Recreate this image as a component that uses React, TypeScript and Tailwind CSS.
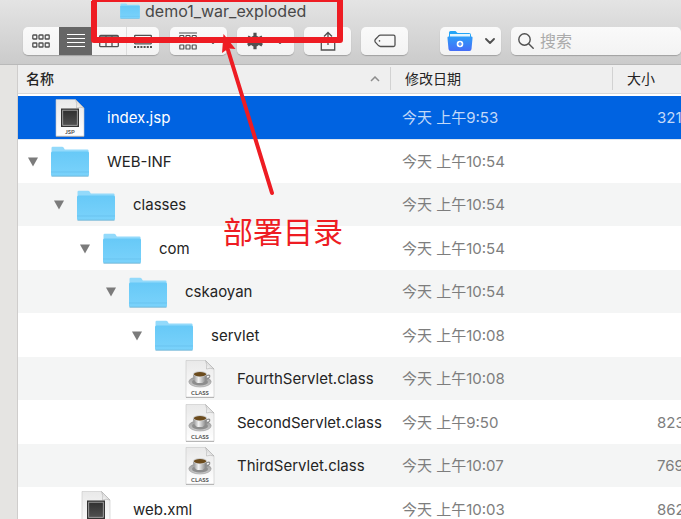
import React from 'react';

type Kind = 'folder' | 'class' | 'doc' | 'jsp';
type Entry = { name: string; kind: Kind; level: number; date: string; size?: string };

const entries: Entry[] = [
  { name: 'index.jsp', kind: 'jsp', level: 0, date: '今天 上午9:53', size: '321' },
  { name: 'WEB-INF', kind: 'folder', level: 0, date: '今天 上午10:54' },
  { name: 'classes', kind: 'folder', level: 1, date: '今天 上午10:54' },
  { name: 'com', kind: 'folder', level: 2, date: '今天 上午10:54' },
  { name: 'cskaoyan', kind: 'folder', level: 3, date: '今天 上午10:54' },
  { name: 'servlet', kind: 'folder', level: 4, date: '今天 上午10:08' },
  { name: 'FourthServlet.class', kind: 'class', level: 5, date: '今天 上午10:08' },
  { name: 'SecondServlet.class', kind: 'class', level: 5, date: '今天 上午9:50', size: '823' },
  { name: 'ThirdServlet.class', kind: 'class', level: 5, date: '今天 上午10:07', size: '769' },
  { name: 'web.xml', kind: 'doc', level: 1, date: '今天 上午10:03', size: '862' },
];

const indents = ['pl-[10px]', 'pl-[36px]', 'pl-[62px]', 'pl-[88px]', 'pl-[114px]', 'pl-[140px]'];

const toolButton =
  'flex h-7 shrink-0 items-center justify-center rounded-[5px] bg-gradient-to-b from-[#fafafa] to-[#f3f3f3] shadow-[0_1px_1px_rgba(0,0,0,0.22)] text-[#505050]';

function Folder({ className }: { className: string }) {
  return (
    <svg viewBox="0 0 38 31" className={className} aria-hidden="true">
      <defs>
        <linearGradient id="folderFace" x1="0" y1="0" x2="0" y2="1">
          <stop offset="0" stopColor="#67c9f7" />
          <stop offset="1" stopColor="#7ad2fb" />
        </linearGradient>
      </defs>
      <path d="M0.500 30V2Q0.500 0.800 1.700 0.800H11Q12.300 0.800 12.900 2L13.800 3.500H36.400Q37.600 3.500 37.600 4.700V30Z" fill="#93dafb" />
      <path d="M0 7Q0 5.500 1.500 5.500H36.500Q38 5.500 38 7V28.500Q38 30 36.500 30H1.500Q0 30 0 28.500Z" fill="url(#folderFace)" />
      <path d="M0 26H38" stroke="#64bfeb" strokeWidth="0.7" />
      <path d="M0.500 30.200H37.500" stroke="#69b2d5" strokeWidth="0.9" />
    </svg>
  );
}

function PageIcon({ kind }: { kind: Kind }) {
  return (
    <svg viewBox="0 0 30 38" className="h-[38px] w-[30px]" aria-hidden="true">
      <defs>
        <linearGradient id="paper" x1="0" y1="0" x2="0" y2="1">
          <stop offset="0" stopColor="#e9e9e9" />
          <stop offset="1" stopColor="#ffffff" />
        </linearGradient>
        <linearGradient id="curl" x1="0" y1="1" x2="1" y2="0">
          <stop offset="0" stopColor="#ffffff" />
          <stop offset="1" stopColor="#bcbcbc" />
        </linearGradient>
        <linearGradient id="cup" x1="0" y1="0" x2="1" y2="0">
          <stop offset="0" stopColor="#8b8b8b" />
          <stop offset="0.400" stopColor="#f2f2f2" />
          <stop offset="1" stopColor="#777777" />
        </linearGradient>
        <linearGradient id="plate" x1="0" y1="0" x2="0" y2="1">
          <stop offset="0" stopColor="#9a9a9a" />
          <stop offset="1" stopColor="#cccccc" />
        </linearGradient>
        <linearGradient id="screen" x1="0" y1="0" x2="0" y2="1">
          <stop offset="0" stopColor="#303030" />
          <stop offset="1" stopColor="#505050" />
        </linearGradient>
      </defs>
      <path d="M1 0.500H20.500L29 9V37.300H1Z" fill="url(#paper)" stroke="#c6c6c6" strokeWidth="0.6" />
      <path d="M1 37.400H29" stroke="#a5a5a5" strokeWidth="0.8" />
      <path d="M20.500 0.500L29 9Q25 7.500 21.500 9Q22.500 4.500 20.500 0.500Z" fill="url(#curl)" stroke="#a5a5a5" strokeWidth="0.500" />
      {kind === 'class' ? (
        <>
          <ellipse cx="15" cy="21.800" rx="11.200" ry="5.200" fill="url(#plate)" stroke="#8f8f8f" strokeWidth="0.500" />
          <ellipse cx="15" cy="22" rx="8" ry="3.600" fill="#8d8d8d" />
          <path d="M22 15.500Q25.500 14.500 24.600 17Q23.500 19 21 19.300" fill="none" stroke="#8a8a8a" strokeWidth="1.200" />
          <path d="M8 14.300Q8 20.500 12 23H17.500Q22 20.500 22 14.300Z" fill="url(#cup)" />
          <ellipse cx="15" cy="14" rx="7.200" ry="2.900" fill="#d2d2d2" />
          <ellipse cx="15" cy="14.300" rx="6.200" ry="2.200" fill="#6b4b1d" />
          <text x="15" y="35" textAnchor="middle" fontSize="6" fontWeight="700" fill="#555555" fontFamily="Lato, sans-serif">CLASS</text>
        </>
      ) : (
        <>
          <rect x="6" y="9.500" width="18" height="18.500" fill="#333333" />
          <rect x="7.700" y="11.200" width="14.600" height="15.100" fill="url(#screen)" stroke="#b5b5b5" strokeWidth="0.800" />
          {kind === 'jsp' && (
            <text x="15" y="35" textAnchor="middle" fontSize="6" fontWeight="700" fill="#555555" fontFamily="Lato, sans-serif">JSP</text>
          )}
        </>
      )}
    </svg>
  );
}

function Chevron() {
  return (
    <svg viewBox="0 0 10 6" className="h-[6px] w-[10px]" fill="none" stroke="#505050" strokeWidth="1.800" strokeLinecap="round" strokeLinejoin="round" aria-hidden="true">
      <path d="M1 1L5 5L9 1" />
    </svg>
  );
}

function Toolbar() {
  return (
    <div className="flex items-center pt-[5px] pl-[23px]">
      <div className={`${toolButton} overflow-hidden`} role="group" aria-label="显示">
        <button aria-label="图标" className="flex h-full w-9 items-center justify-center">
          <svg viewBox="0 0 18 14" className="h-[14px] w-[18px]" fill="none" stroke="currentColor" strokeWidth="1.300">
            {[0.8, 7, 13.2].map((x) => [1, 9].map((y) => <rect key={`${x}-${y}`} x={x} y={y} width="4" height="4" rx="0.600" />))}
          </svg>
        </button>
        <button aria-label="列表" className="flex h-full w-[33px] items-center justify-center bg-[#666666] text-white">
          <svg viewBox="0 0 18 14" className="h-[14px] w-[18px]" stroke="currentColor" strokeWidth="1">
            <path d="M0 0.500H18M0 4.500H18M0 8.500H18M0 12.500H18" />
          </svg>
        </button>
        <button aria-label="分栏" className="flex h-full w-[34px] items-center justify-center">
          <svg viewBox="0 0 20 14" className="h-[14px] w-5" fill="none" stroke="currentColor" strokeWidth="1.300">
            <rect x="0.700" y="1.300" width="18.600" height="11.400" rx="1" />
            <path d="M7 1V13M13 1V13M1 3H19" />
          </svg>
        </button>
        <button aria-label="画廊" className="flex h-full w-[33px] items-center justify-center border-l border-[#dddddd]">
          <svg viewBox="0 0 18 14" className="h-[14px] w-[18px]" fill="none" stroke="currentColor" strokeWidth="1.300">
            <rect x="0.700" y="1.300" width="16.600" height="8.500" rx="0.500" />
            <path d="M0 13H18" strokeWidth="2" strokeDasharray="2 1.200" />
          </svg>
        </button>
      </div>
      <button aria-label="分组" className={`${toolButton} ml-[11px] w-[57px] gap-[11px]`}>
        <svg viewBox="0 0 18 18" className="h-[18px] w-[18px]" fill="none" stroke="currentColor" strokeWidth="1.200">
          <path d="M0 1H18M0 10H18" />
          {[0.8, 7, 13.2].map((x) => (
            <React.Fragment key={x}>
              <rect x={x} y="3.500" width="4" height="4" rx="0.600" />
              <rect x={x} y="13" width="4" height="4" rx="0.600" />
            </React.Fragment>
          ))}
        </svg>
        <Chevron />
      </button>
      <button aria-label="操作" className={`${toolButton} ml-[10px] w-[57px] gap-[11px]`}>
        <svg viewBox="0 0 18 18" className="h-[18px] w-[18px]" aria-hidden="true">
          <circle cx="9" cy="9" r="5.500" fill="currentColor" />
          <path d="M9 0.700V17.300M1.800 4.850L16.200 13.150M1.800 13.150L16.200 4.850" stroke="currentColor" strokeWidth="3.200" />
          <circle cx="9" cy="9" r="1.800" fill="#777777" />
        </svg>
        <Chevron />
      </button>
      <button aria-label="共享" className={`${toolButton} ml-[10px] w-[47px]`}>
        <svg viewBox="0 0 16 20" className="h-5 w-4" fill="none" stroke="currentColor" strokeWidth="1.300">
          <path d="M5 7.500H1.300V19H14.700V7.500H11M8 14V1.500M4 5.500L8 1.500L12 5.500" />
        </svg>
      </button>
      <button aria-label="标记" className={`${toolButton} ml-[10px] w-[47px]`}>
        <svg viewBox="0 0 22 14" className="h-[14px] w-[22px]" fill="none" stroke="currentColor" strokeWidth="1.300">
          <path d="M6.500 1.200H19.500Q21 1.200 21 2.700V11Q21 12.500 19.500 12.500H6.500Q5.500 12.500 4.500 11.600L1.300 8.200Q0.500 6.800 1.300 5.500L4.500 2.100Q5.500 1.200 6.500 1.200Z" />
          <circle cx="5.500" cy="6.900" r="0.800" fill="currentColor" stroke="none" />
        </svg>
      </button>
      <button aria-label="新建文件夹" className={`${toolButton} ml-[32px] w-[61px] gap-3`}>
        <svg viewBox="0 0 26 20" className="h-5 w-[26px]" aria-hidden="true">
          <defs>
            <linearGradient id="blueFolder" x1="0" y1="0" x2="0" y2="1">
              <stop offset="0" stopColor="#2e9df8" />
              <stop offset="1" stopColor="#456df7" />
            </linearGradient>
          </defs>
          <path d="M2 8V1.500Q2 0 3.500 0H8.500L10.500 2H22Q24 2 24 4V9H2Z" fill="#23a5f7" />
          <path d="M3 3H23V9H3Z" fill="#e3f6ff" />
          <path d="M1.500 5.500H24.500Q26 5.500 25.500 7.500L24.500 18Q24.300 20 22.500 20H3.500Q1.700 20 1.500 18L0.500 7.500Q0 5.500 1.500 5.500Z" fill="url(#blueFolder)" />
          <circle cx="13" cy="13" r="3.300" fill="white" />
          <path d="M13 11V15M11 13H15" stroke="#3a7ff6" strokeWidth="1.200" />
        </svg>
        <Chevron />
      </button>
      <label className={`${toolButton} ml-[10px] min-w-0 flex-1 gap-[6px] pl-[7px]`}>
        <svg viewBox="0 0 16 16" className="h-4 w-4 shrink-0" fill="none" stroke="currentColor" strokeWidth="1.400" strokeLinecap="round" aria-hidden="true">
          <circle cx="6.500" cy="6.500" r="5.700" />
          <path d="M10.700 10.700L15.200 15.200" />
        </svg>
        <input aria-label="搜索" placeholder="搜索" className="w-full min-w-0 bg-transparent text-base leading-6 outline-none placeholder:text-[#aaaaaa]" />
      </label>
    </div>
  );
}

function Annotation() {
  return (
    <div className="pointer-events-none absolute inset-0 overflow-hidden">
      <svg className="h-full w-full" fill="none" stroke="#ee1c23" aria-hidden="true">
        <path d="M94 1V40H340V1" strokeWidth="6" strokeLinejoin="round" />
        <path d="M92 0.500H343" strokeWidth="3" />
        <path d="M272 193L228 50" strokeWidth="4" strokeLinecap="round" />
        <path d="M223.500 34L222 53L228.500 48.500L235.500 49Z" fill="#ee1c23" stroke="none" />
      </svg>
      <span className="absolute top-[210px] left-[223px] text-[30px] leading-[44px] text-[#ee1c23]">部署目录</span>
    </div>
  );
}

export default function App() {
  return (
    <main className="relative h-screen overflow-hidden bg-white font-['Inter','Noto_Sans_CJK_SC',sans-serif] text-[#242424]">
      <div className="flex h-full flex-col">
        <header className="h-[65px] shrink-0 border-b border-[#b9b9b9] bg-gradient-to-b from-[#e4e4e4] to-[#cbcbcb]">
          <h1 className="flex h-[22px] items-center gap-[5px] pl-[120px] text-base leading-[22px] font-normal text-[#484848]">
            <Folder className="h-4 w-5" />
            demo1_war_exploded
          </h1>
          <Toolbar />
        </header>
        <div className="flex min-h-0 flex-1">
          <aside className="w-[18px] shrink-0 border-r border-[#cfcdcc] bg-[#e5e4e2]" />
          <div className="min-w-0 flex-1 overflow-hidden">
            <table className="w-full table-fixed border-collapse text-left">
              <colgroup>
                <col />
                <col className="w-[222px]" />
                <col className="w-[68px]" />
              </colgroup>
              <thead className="bg-[#efefef] text-[14px] leading-5">
                <tr className="h-7">
                  <th className="p-0 pl-2 font-medium">
                    <div className="flex h-[23px] items-center justify-between border-r border-[#d2d2d2] pr-[10px]">
                      名称
                      <svg viewBox="0 0 10 6" className="h-[6px] w-[10px]" fill="none" stroke="#8d8d8d" strokeWidth="1.500" aria-label="升序">
                        <path d="M1 5L5 1L9 5" />
                      </svg>
                    </div>
                  </th>
                  <th className="p-0 font-normal">
                    <div className="flex h-[23px] items-center border-r border-[#d2d2d2] pl-[14px]">修改日期</div>
                  </th>
                  <th className="p-0 pl-[14px] font-normal">大小</th>
                </tr>
              </thead>
              <tbody className="border-t border-[#d8d8d8] text-[15px] leading-5">
                <tr className="h-[3px] bg-white" aria-hidden="true">
                  <td colSpan={3} className="p-0" />
                </tr>
                {entries.map((entry, i) => (
                  <tr
                    key={entry.name}
                    className={`${i % 2 ? 'h-11' : 'h-[43px]'} ${
                      i === 0
                        ? 'border-b border-[#dfe6ef] bg-[#0063e1] text-white'
                        : i % 2
                          ? 'bg-white'
                          : 'bg-[#f4f5f5]'
                    }`}
                  >
                    <td className="px-0 pt-px pb-0">
                      <div className={`flex items-center ${indents[entry.level]}`}>
                        {entry.kind === 'folder' ? (
                          <button aria-label={`收起 ${entry.name}`} className="w-[10px] shrink-0">
                            <svg viewBox="0 0 10 10" className="h-[10px] w-[10px]" fill="#7b7b7b">
                              <path d="M0 0.500H10L5 9.500Z" />
                            </svg>
                          </button>
                        ) : (
                          <span className="w-[10px] shrink-0" />
                        )}
                        <span className="ml-[13px] flex w-[38px] shrink-0 justify-center">
                          {entry.kind === 'folder' ? <Folder className="h-[31px] w-[38px]" /> : <PageIcon kind={entry.kind} />}
                        </span>
                        <span className="ml-[18px] whitespace-nowrap">{entry.name}</span>
                      </div>
                    </td>
                    <td className={`pt-px pr-0 pb-0 pl-[11px] ${i === 0 ? 'text-[#c3d9f8]' : 'text-[#7d7d7d]'}`}>{entry.date}</td>
                    <td className={`overflow-hidden pt-px pr-0 pb-0 pl-11 ${i === 0 ? 'text-[#c3d9f8]' : 'text-[#7d7d7d]'}`}>{entry.size}</td>
                  </tr>
                ))}
              </tbody>
            </table>
          </div>
        </div>
      </div>
      <Annotation />
    </main>
  );
}
